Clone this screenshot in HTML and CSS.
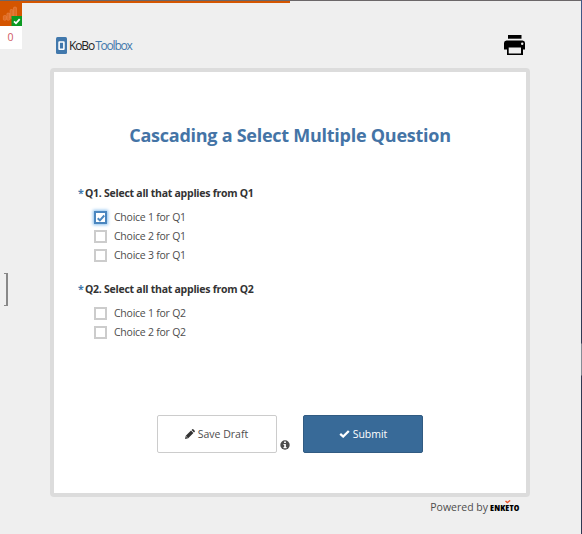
FILE: index.html
```html
<!DOCTYPE html>
<html lang="en">
<head>
<meta charset="utf-8">
<title>Cascading a Select Multiple Question</title>
<link rel="stylesheet" href="styles.css">
</head>
<body>
<div class="progress"></div>
<aside class="status">
  <div class="status-icon">
    <svg width="22" height="25" viewBox="0 0 22 25">
      <g fill="#f08a50" fill-opacity=".45" stroke="#f5a676" stroke-opacity=".5" stroke-width=".6"><rect x="3.3" y="14.5" width="3" height="4.8" rx="1"/><rect x="6.8" y="12" width="3" height="7.3" rx="1"/><rect x="10" y="8.5" width="3" height="9" rx="1"/><rect x="13.5" y="6" width="3" height="11" rx="1"/></g>
      <rect x="11.5" y="15" width="10.5" height="10" fill="#0c9a22"/>
      <path d="M14 20.3l2 2 3.7-4.2" fill="none" stroke="#fff" stroke-width="1.8"/>
    </svg>
  </div>
  <div class="queue">0</div>
</aside>
<div class="handle"></div>
<div class="screen-edge"></div>
<main class="form">
  <header class="form-header">
    <div class="logo">
      <svg width="11" height="17" viewBox="0 0 11 17"><rect width="11" height="17" rx="1.5" fill="#4178ac"/><rect x="3.1" y="5" width="4.8" height="7.2" rx=".3" fill="none" stroke="#fff" stroke-width="1.6"/></svg>
      <span class="logo-kobo">KoBo</span><span class="logo-toolbox">Toolbox</span>
    </div>
    <svg class="print" width="21" height="20" viewBox="0 0 21 20"><path d="M4 0h13.500v3.700H4z"/><path d="M2.500 5.500h16Q21 5.800 21 8v6.500h-2V20H3v-5.500H0V8Q0 5.800 2.500 5.500z"/><path d="M4.700 12.500h12.300v6H4.700z" fill="#efefef"/><circle cx="18.200" cy="8.700" r="1.200" fill="#efefef"/></svg>
  </header>
  <section class="paper">
    <h1>Cascading a Select Multiple Question</h1>
    <fieldset class="question">
      <legend><span class="required">*</span><span>Q1. Select all that applies from Q1</span></legend>
      <div class="option"><span class="box checked"><svg width="8" height="8" viewBox="0 0 8 8"><path d="M.7 4.200l2.200 2.200L7.300 1.500" fill="none" stroke="#4a86bf" stroke-width="2"/></svg></span>Choice 1 for Q1</div>
      <div class="option"><span class="box"></span>Choice 2 for Q1</div>
      <div class="option"><span class="box"></span>Choice 3 for Q1</div>
    </fieldset>
    <fieldset class="question">
      <legend><span class="required">*</span><span>Q2. Select all that applies from Q2</span></legend>
      <div class="option"><span class="box"></span>Choice 1 for Q2</div>
      <div class="option"><span class="box"></span>Choice 2 for Q2</div>
    </fieldset>
    <div class="actions">
      <div class="button draft"><svg width="10" height="10" viewBox="0 0 10 10"><path d="M0 10l.8-3.200L6 1.600 8.400 4 3.200 9.200zM6.600 1L7.300.3q.5-.5 1 0l1.400 1.400q.5.500 0 1L9 3.400z" fill="#333"/><path d="M1.200 7.500l1.300 1.300" stroke="#fff" stroke-width=".7"/></svg><span>Save Draft</span></div>
      <svg class="info" width="10" height="10" viewBox="0 0 10 10"><circle cx="5" cy="5" r="4.700" fill="#4d4d4d"/><path d="M4.100 1.600h1.800v1.500H4.100zM3.500 4h2.400v3h.7v1.200H3.500V7h.7V5.100h-.7z" fill="#fff"/></svg>
      <div class="button submit"><svg width="11" height="8" viewBox="0 0 11 8"><path d="M1.200 3.800l3 2.700L9.800 1" fill="none" stroke="#fff" stroke-width="2.300"/></svg><span>Submit</span></div>
    </div>
  </section>
  <footer><span class="powered">Powered by</span><span class="enketo">ENKETO<svg width="6" height="4" viewBox="0 0 6 4"><path d="M.5 1l1.800 1.500L5.200.5" fill="none" stroke="#ee5528" stroke-width="1.400"/></svg></span></footer>
</main>
</body>
</html>
```
FILE: styles.css
```css
* { box-sizing: border-box; }
body {
  margin: 0;
  width: 582px;
  height: 534px;
  overflow: hidden;
  background: #efefef;
  color: #4d4d4d;
  font: 10.5px/19px "Open Sans", sans-serif;
}
svg { display: block; flex: none; }
.progress {
  position: absolute;
  top: 0;
  left: 0;
  width: 100%;
  height: 3px;
  border-top: 1px solid #6b6769;
  background: linear-gradient(#d45500, #d45500) 0 0 / 290px 2px no-repeat;
}
.status {
  position: absolute;
  top: 1px;
  left: 0;
  width: 22px;
}
.status-icon { height: 25px; background: #d45500; }
.queue {
  height: 23px;
  background: #fff;
  color: #cf5a62;
  padding-right: 1px;
  text-align: center;
  line-height: 22px;
}
.handle {
  position: absolute;
  top: 273px;
  left: 4px;
  width: 4px;
  height: 33px;
  border: solid #888;
  border-width: 1px 2px 1px 0;
}
.screen-edge {
  position: absolute;
  top: 0;
  right: 0;
  width: 1px;
  height: 534px;
  background: linear-gradient(#405888 0, #303852 343px, #858b95 344px, #858b95 375px, #303852 376px);
}
.form { width: 480px; margin-left: 50px; }
.form-header {
  display: flex;
  justify-content: space-between;
  align-items: flex-start;
  height: 68px;
  padding: 35px 5px 0 6px;
}
.logo {
  display: flex;
  align-items: center;
  height: 20px;
  font-size: 12px;
}
.logo-kobo { margin-left: 2px; color: #222; letter-spacing: -1.1px; }
.logo-toolbox { margin-left: 1px; color: #4178ac; letter-spacing: -1.2px; }
.paper {
  height: 429px;
  padding: 51px 24px 0;
  border: 4px solid #dcdcdc;
  border-radius: 4px;
  background: #fff;
}
h1 {
  margin: 0 0 37px;
  color: #4474a6;
  font-size: 18px;
  font-weight: 700;
  letter-spacing: -.26px;
  line-height: 24px;
  text-align: center;
}
.question {
  margin: 0 0 15px;
  padding: 0;
  border: 0;
}
legend {
  display: flex;
  padding: 0;
  margin-bottom: 5px;
  color: #333;
  font-size: 10.5px;
  font-weight: 700;
  letter-spacing: -.26px;
  line-height: 19px;
}
.required { width: 7px; color: #4178ac; }
.option {
  display: flex;
  align-items: center;
  height: 19px;
  padding-left: 16px;
  letter-spacing: -.24px;
}
.box {
  display: flex;
  align-items: center;
  justify-content: center;
  width: 13px;
  height: 13px;
  margin-right: 7px;
  border: 2px solid #ccc;
}
.checked { border-color: #4a86bf; box-shadow: 0 0 3px 1px #8cc1ee; }
.actions {
  display: flex;
  margin: 73px 0 0 79px;
}
.button {
  display: flex;
  align-items: center;
  justify-content: center;
  width: 120px;
  height: 38px;
  border: 1px solid #ccc;
  border-radius: 2px;
}
.draft { gap: 3px; padding-right: 1px; }
.info { margin: 25px 13px 0 3px; }
.submit {
  gap: 3px;
  border-color: #315b82;
  background: #386a98;
  color: #fff;
}
footer {
  display: flex;
  justify-content: flex-end;
  align-items: center;
  height: 20px;
  padding-right: 10px;
}
.enketo {
  position: relative;
  width: 30px;
  margin-left: 2px;
  padding-top: 1px;
  color: #000;
  font-size: 9px;
  font-weight: 800;
  font-stretch: 75%;
  letter-spacing: .15px;
}
.enketo svg { position: absolute; top: 3px; left: 15px; }
```
